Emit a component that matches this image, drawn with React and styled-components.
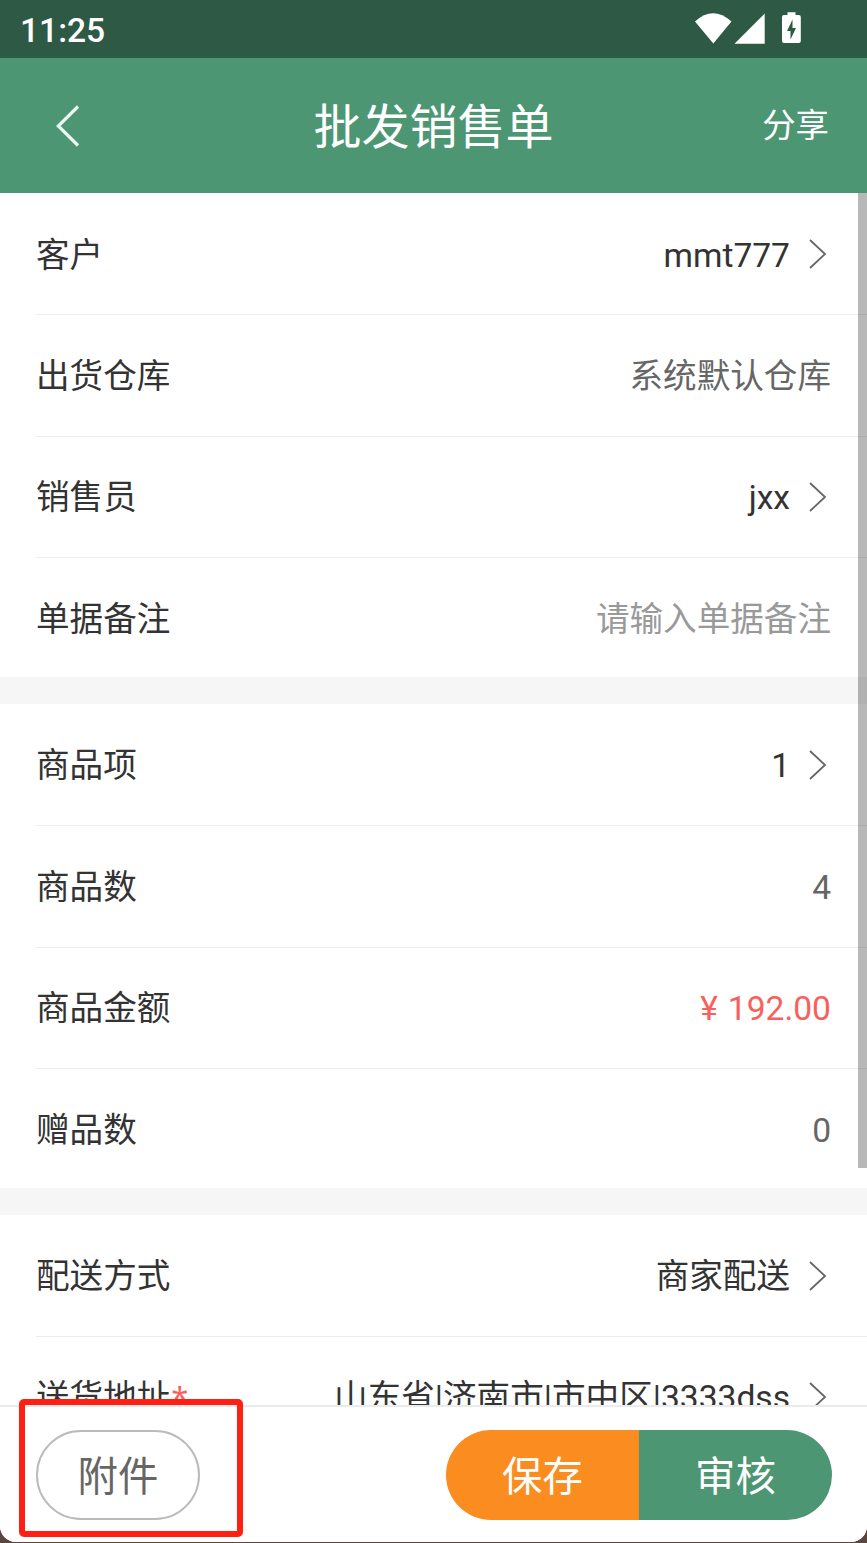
import React from "react";
import styled, { createGlobalStyle } from "styled-components";

const GlobalStyle = createGlobalStyle`
  * {
    box-sizing: border-box;
  }
  body {
    margin: 0;
    overflow: hidden;
    background-color: #5a463f;
    font-family: Roboto, "Noto Sans CJK SC", sans-serif;
  }
  button {
    font-family: inherit;
    padding: 0;
    border: none;
    cursor: pointer;
  }
`;

const Screen = styled.div`
  display: flex;
  flex-direction: column;
  position: relative;
  height: 1542px;
  overflow: hidden;
  border-radius: 0 0 16px 16px;
  background-color: #fff;
`;

const StatusBar = styled.div`
  display: flex;
  flex: none;
  justify-content: space-between;
  height: 58px;
  padding: 0 66px 0 20px;
  background-color: #2e5945;
`;

const Clock = styled.span`
  color: #fff;
  font-size: 33.6px;
  font-weight: 500;
  line-height: 62px;
`;

const StatusIcons = styled.svg`
  width: 108px;
  height: 58px;
  fill: #fff;
`;

const Header = styled.header`
  display: grid;
  grid-template-columns: 1fr auto 1fr;
  align-items: center;
  flex: none;
  height: 135px;
  padding: 0 38px;
  color: #fff;
  background-color: #4d9674;
`;

const BackIcon = styled.svg`
  width: 24px;
  height: 42px;
  margin-left: 18px;
  fill: none;
  stroke: #eef5f1;
  stroke-width: 3.2;
`;

const Title = styled.h1`
  margin: 0;
  padding-top: 4px;
  font-size: 48px;
  font-weight: 400;
  line-height: 70px;
`;

const Share = styled.button`
  justify-self: end;
  color: #fff;
  font-size: 33.4px;
  line-height: 48px;
  background: none;
`;

const Content = styled.main`
  flex: 1;
  min-height: 0;
  overflow: hidden;
  background-color: #f6f6f6;
`;

const Section = styled.section`
  margin-bottom: 26.4px;
  padding-left: 36px;
  background-color: #fff;
`;

const Row = styled.div`
  display: flex;
  align-items: center;
  justify-content: space-between;
  height: 121.4px;
  padding: 4px 36px 0 0;
  box-shadow: 0 1px #ededed;
  font-size: 33.6px;
  line-height: 48px;

  &:last-child {
    height: 120.2px;
    padding-top: 5px;
    box-shadow: none;
  }
`;

const Label = styled.span`
  color: #333;
`;

const Required = styled.span`
  margin-left: 1px;
  color: #fa5f5c;
  font-family: "Noto Sans", sans-serif;
  font-size: 31px;
  line-height: 1;
`;

const Value = styled.span`
  display: flex;
  align-items: center;
  color: ${(props) => props.$color || "#666"};
  white-space: pre;
  word-spacing: 1.5px;
`;

const Arrow = styled.svg`
  width: 18px;
  height: 30px;
  margin: -3px 4px 0 19px;
  fill: none;
  stroke: #666;
  stroke-width: 1.8;
`;

const ScrollThumb = styled.div`
  position: absolute;
  top: 193px;
  right: 0;
  width: 9px;
  height: 975px;
  background-color: rgba(0, 0, 0, 0.28);
`;

const Footer = styled.footer`
  display: flex;
  flex: none;
  align-items: flex-start;
  justify-content: space-between;
  height: 137px;
  padding: 23px 35px 0 36px;
  border-top: 2px solid #ebebeb;
  background-color: #fff;
`;

const Attachment = styled.button`
  width: 164px;
  height: 90px;
  padding-bottom: 4px;
  border: 2px solid #bbb;
  border-radius: 45px;
  color: #666;
  font-size: 40.4px;
  background-color: #fff;
`;

const Actions = styled.div`
  display: flex;
  overflow: hidden;
  height: 90px;
  border-radius: 45px;
`;

const Action = styled.button`
  width: 193px;
  padding-bottom: 4px;
  color: #fff;
  font-size: 40.4px;
  background-color: ${(props) => props.$color};
`;

const Highlight = styled.div`
  position: absolute;
  top: 1399px;
  left: 19px;
  width: 224px;
  height: 138px;
  border: 6px solid #ff1f13;
  border-radius: 5px;
  pointer-events: none;
`;

const sections = [
  [
    { label: "客户", value: "mmt777", color: "#333", arrow: true },
    { label: "出货仓库", value: "系统默认仓库" },
    { label: "销售员", value: "jxx", color: "#333", arrow: true },
    { label: "单据备注", value: "请输入单据备注", color: "#999" },
  ],
  [
    { label: "商品项", value: "1", color: "#333", arrow: true },
    { label: "商品数", value: "4" },
    { label: "商品金额", value: "¥ 192.00", color: "#fa5f5c" },
    { label: "赠品数", value: "0" },
  ],
  [
    { label: "配送方式", value: "商家配送", color: "#333", arrow: true },
    {
      label: "送货地址",
      value: "山东省|济南市|市中区|3333dss",
      color: "#333",
      arrow: true,
      required: true,
    },
  ],
];

export default function App() {
  return (
    <>
      <GlobalStyle />
      <Screen>
        <StatusBar>
          <Clock>11:25</Clock>
          <StatusIcons viewBox="0 0 108 58">
            <path d="M2 21.500Q20 5 38.500 21.500L20.300 43.500Z" />
            <path d="M41.500 43.700L71.700 13.500V43.700Z" />
            <path
              fillRule="evenodd"
              d="M94.500 12.200h8v2.800h3.300a2 2 0 0 1 2 2v24a2 2 0 0 1-2 2h-14.800a2 2 0 0 1-2-2v-24a2 2 0 0 1 2-2h3.500ZM99.500 19.500L94 31h3.500v8.500L103 28h-3.500Z"
            />
          </StatusIcons>
        </StatusBar>
        <Header>
          <BackIcon viewBox="0 0 24 42">
            <path d="M22 1.500L2.300 21L22 40.500" />
          </BackIcon>
          <Title>批发销售单</Title>
          <Share>分享</Share>
        </Header>
        <Content>
          {sections.map((rows, i) => (
            <Section key={i}>
              {rows.map((row) => (
                <Row key={row.label}>
                  <Label>
                    {row.label}
                    {row.required && <Required>*</Required>}
                  </Label>
                  <Value $color={row.color}>
                    {row.value}
                    {row.arrow && (
                      <Arrow viewBox="0 0 18 30">
                        <path d="M1 1L16 15L1 29" />
                      </Arrow>
                    )}
                  </Value>
                </Row>
              ))}
            </Section>
          ))}
        </Content>
        <Footer>
          <Attachment>附件</Attachment>
          <Actions>
            <Action $color="#fb8c1f">保存</Action>
            <Action $color="#4d9674">审核</Action>
          </Actions>
        </Footer>
        <ScrollThumb />
        <Highlight />
      </Screen>
    </>
  );
}
